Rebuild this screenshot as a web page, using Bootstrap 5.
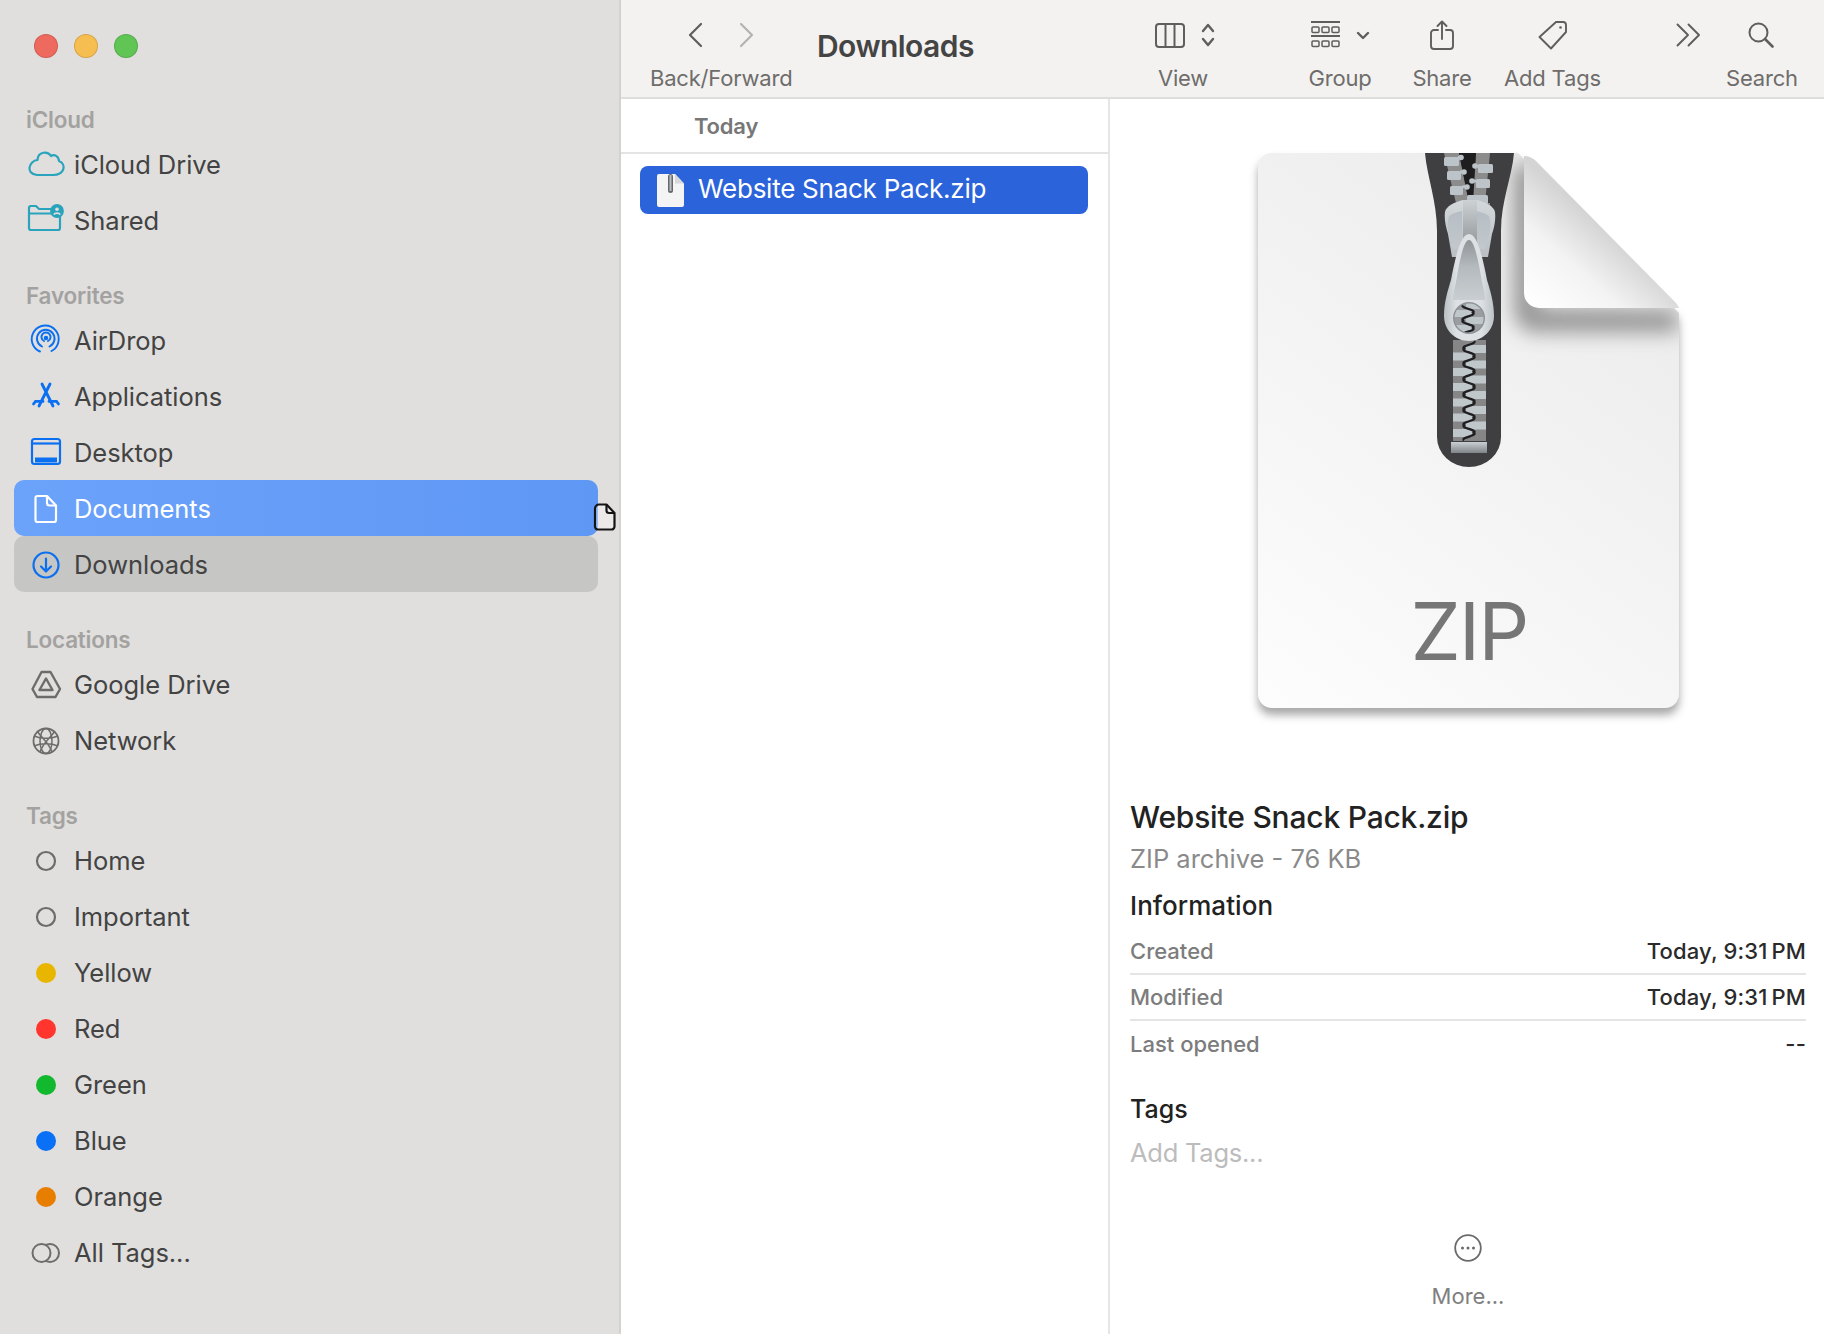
<!DOCTYPE html>
<html lang="en">
<head>
<meta charset="utf-8">
<title>Downloads</title>
<link href="https://cdn.jsdelivr.net/npm/bootstrap@5.3.0/dist/css/bootstrap.min.css" rel="stylesheet">
<style>
html,body{height:1334px;overflow:hidden;}
body{font-family:Inter,"Liberation Sans",sans-serif;background:#fff;color:#434343;}
.fw{width:1824px;height:1334px;}
.side{width:621px;height:1334px;background:#e0dfdd;border-right:2px solid #d3d2d0;flex:none;position:relative;}
.lights{height:102px;padding:34px 0 0 34px;gap:16px;}
.light{width:24px;height:24px;border-radius:50%;border:1px solid rgba(0,0,0,.13);}
.l-r{background:#ee6a5f;}.l-y{background:#f6be50;}.l-g{background:#61c555;}
.sect{margin-bottom:30px;}
.sect-h{height:34px;padding:2px 0 0 26px;font-size:22.5px;font-weight:600;color:#a3a2a1;letter-spacing:-.2px;line-height:32px;}
.srow{height:56px;margin:0 21px 0 14px;padding:2px 0 0 60px;font-size:25.5px;letter-spacing:-.04px;position:relative;border-radius:10px;}
.srow .ico{position:absolute;left:0;top:0;width:64px;height:56px;}
.sel-a{background:linear-gradient(90deg,#6ba2fa,#5f97f5);color:#fff;}
.sel-b{background:#c6c6c4;}
.dragdoc{position:absolute;left:593px;top:503px;width:23px;height:28px;}
.tbar{height:99px;background:#f3f2f0;border-bottom:2px solid #dededd;}
.tool{flex:none;}
.tool .ti{height:62px;padding-top:8px;}
.tool .tl{font-size:22px;line-height:32px;color:#6e6d6b;letter-spacing:-.2px;white-space:nowrap;}
.t-bf{width:142px;margin-left:29px;}
.t-bf .ti{gap:36px;}
.t-title{width:303px;margin-left:25px;padding-top:27px;font-size:30px;line-height:38px;font-weight:600;color:#444;letter-spacing:-.55px;}
.t-view{width:126px;}
.t-view .ti{padding-left:3px;}
.t-group{width:120px;margin-left:34px;}
.t-group .ti{padding-left:1px;}
.t-share{width:84px;}
.t-tags{width:137px;}
.t-more{width:76px;margin-left:29px;}
.t-search{width:70px;}
.list{width:489px;border-right:2px solid #e6e6e6;flex:none;height:1235px;}
.colhead{height:55px;border-bottom:2px solid #e4e4e4;padding-left:73px;font-size:22px;font-weight:600;color:#777;line-height:54px;letter-spacing:-.2px;}
.filerow{height:48px;margin:12px 20px 0 19px;background:#2b63db;border-radius:8px;color:#fff;font-size:26px;letter-spacing:-.25px;padding-left:17px;gap:14px;}
.filerow span{padding-bottom:3px;}
.insp{width:714px;flex:none;}
.det{padding:0 18px 0 20px;}
.d-name{font-size:30px;line-height:40px;font-weight:550;color:#222;letter-spacing:-.2px;white-space:nowrap;}
.d-sub{font-size:25.5px;line-height:36px;margin-top:4px;color:#8a8a8a;}
.d-h{font-size:26px;line-height:34px;font-weight:550;color:#222;letter-spacing:.05px;}
.d-h1{margin-top:12px;margin-bottom:6px;}
.d-h2{margin-top:25px;font-size:25px;}
.d-row{height:46px;font-size:22px;}
.d-row.sep{border-bottom:2px solid #e5e5e5;}
.d-k{color:#7c7c7c;font-weight:500;}
.d-v{color:#2a2a2a;font-weight:500;letter-spacing:.15px;}
.d-add{font-size:25.5px;line-height:36px;margin-top:9px;color:#bcbcbc;letter-spacing:-.25px;}
.d-more{margin-top:63px;}
.d-more span{font-size:22px;line-height:30px;margin-top:19px;color:#808080;}
.ziplabel{font-family:Inter,sans-serif;font-size:80px;font-weight:400;letter-spacing:-2px;fill:#767676;}
svg{display:block;}
</style>
</head>
<body>
<div class="d-flex fw">
  <aside class="side">
    <div class="d-flex lights">
      <span class="light l-r"></span>
      <span class="light l-y"></span>
      <span class="light l-g"></span>
    </div>

    <div class="sect">
      <div class="sect-h">iCloud</div>
      <div class="srow d-flex align-items-center"><svg class="ico" viewBox="0 0 64 56" fill="none" stroke="#2aa3bd" stroke-width="2.200"><path d="M23 39h16c12 0 13.500-11 6-14-.5-5-4.500-7-8-5-3-5-13-5-13.500 4C15 24.500 11 38 23 39z" stroke-linejoin="round"/></svg>iCloud Drive</div>
      <div class="srow d-flex align-items-center"><svg class="ico" viewBox="0 0 64 56" fill="none" stroke="#2aa3bd" stroke-width="2.200"><path d="M41.500 17H25l-3-3h-5a2 2 0 0 0-2 2v20a2 2 0 0 0 2 2h27a2 2 0 0 0 2-2V24M15 21.500h25"/><circle cx="43" cy="19" r="5.800" fill="#2aa3bd"/><circle cx="43" cy="17.200" r="1.800" fill="#e0dfdd" stroke="none"/><path d="M39.800 22.600c1-2 5.400-2 6.400 0" stroke="#e0dfdd" stroke-width="1.600"/></svg>Shared</div>
    </div>

    <div class="sect">
      <div class="sect-h">Favorites</div>
      <div class="srow d-flex align-items-center"><svg class="ico" viewBox="0 0 64 56" fill="none" stroke="#0a6ff0" stroke-width="1.900" stroke-linecap="round"><path d="M26 39.500a13.500 13.500 0 1 1 11.500-.5M28 34.500a8.800 8.800 0 1 1 7.500 0M30 29a4.500 4.500 0 1 1 4 0"/><circle cx="32" cy="26" r="1.300" fill="#0a6ff0"/></svg>AirDrop</div>
      <div class="srow d-flex align-items-center"><svg class="ico" viewBox="0 0 64 56" fill="none" stroke="#0a6ff0" stroke-linecap="round"><path d="M28 16l11 22M36 16L25 38" stroke-width="2.800"/><path d="M19.500 36l2-2.600H29M44.500 36l-2-2.600H35" stroke-width="2.800"/></svg>Applications</div>
      <div class="srow d-flex align-items-center"><svg class="ico" viewBox="0 0 64 56" fill="none" stroke="#0a6ff0" stroke-width="2.200"><rect x="18" y="15" width="28" height="25" rx="2.500"/><path d="M18 19.500h28"/><rect x="21" y="33.500" width="22" height="5" fill="#0a6ff0" stroke="none"/></svg>Desktop</div>
      <div class="srow d-flex align-items-center sel-a"><svg class="ico" viewBox="0 0 64 56" fill="none" stroke="#fff" stroke-width="2.200" stroke-linejoin="round"><path d="M23.500 16h9.500l9 9.500V40a2 2 0 0 1-2 2H23.500a2 2 0 0 1-2-2V18a2 2 0 0 1 2-2z"/><path d="M33 16v7a2.500 2.500 0 0 0 2.500 2.500H42"/></svg>Documents</div>
      <div class="srow d-flex align-items-center sel-b"><svg class="ico" viewBox="0 0 64 56" fill="none" stroke="#0a6ff0" stroke-width="2.200" stroke-linecap="round" stroke-linejoin="round"><circle cx="32" cy="29" r="12.500"/><path d="M32 22.500v12.500M27 30.500l5 5 5-5"/></svg>Downloads</div>
    </div>

    <div class="sect">
      <div class="sect-h">Locations</div>
      <div class="srow d-flex align-items-center"><svg class="ico" viewBox="0 0 64 56" fill="none" stroke="#6d6c6a" stroke-width="2.400" stroke-linejoin="round"><path d="M27.500 16h9l9.500 17-4.500 8H23l-4.500-8z"/><path d="M32 22.500L38.500 34h-13z"/></svg>Google Drive</div>
      <div class="srow d-flex align-items-center"><svg class="ico" viewBox="0 0 64 56" fill="none" stroke="#6d6c6a" stroke-width="1.500"><circle cx="32" cy="29" r="12.500" stroke-width="1.800"/><ellipse cx="32" cy="29" rx="6" ry="12.500"/><path d="M20 24c7 3 17 3 24 0M20 34c7-3 17-3 24 0M23 19c4 6 12 12 15 21M41 19c-4 6-12 12-15 21"/></svg>Network</div>
    </div>

    <div class="sect">
      <div class="sect-h">Tags</div>
      <div class="srow d-flex align-items-center"><svg class="ico" viewBox="0 0 64 56"><circle cx="32" cy="29" r="9" fill="none" stroke="#6d6c6a" stroke-width="2.200"/></svg>Home</div>
      <div class="srow d-flex align-items-center"><svg class="ico" viewBox="0 0 64 56"><circle cx="32" cy="29" r="9" fill="none" stroke="#6d6c6a" stroke-width="2.200"/></svg>Important</div>
      <div class="srow d-flex align-items-center"><svg class="ico" viewBox="0 0 64 56"><circle cx="32" cy="29" r="10" fill="#e8b500"/></svg>Yellow</div>
      <div class="srow d-flex align-items-center"><svg class="ico" viewBox="0 0 64 56"><circle cx="32" cy="29" r="10" fill="#ff352e"/></svg>Red</div>
      <div class="srow d-flex align-items-center"><svg class="ico" viewBox="0 0 64 56"><circle cx="32" cy="29" r="10" fill="#12b82e"/></svg>Green</div>
      <div class="srow d-flex align-items-center"><svg class="ico" viewBox="0 0 64 56"><circle cx="32" cy="29" r="10" fill="#0a70f5"/></svg>Blue</div>
      <div class="srow d-flex align-items-center"><svg class="ico" viewBox="0 0 64 56"><circle cx="32" cy="29" r="10" fill="#e87e00"/></svg>Orange</div>
      <div class="srow d-flex align-items-center"><svg class="ico" viewBox="0 0 64 56" fill="none" stroke="#6d6c6a" stroke-width="2"><circle cx="36" cy="29" r="9"/><circle cx="27.500" cy="29" r="9" fill="#e0dfdd"/></svg>All Tags...</div>
    </div>

    <svg class="dragdoc" viewBox="0 0 23 28" fill="rgba(255,255,255,.35)" stroke="#141414" stroke-width="2.200" stroke-linejoin="round"><path d="M6 1.500h7.500l8 8.500v13.500a3 3 0 0 1-3 3H5a3 3 0 0 1-3-3V5.500a4 4 0 0 1 4-4z"/><path d="M13.500 1.500v6a2.500 2.500 0 0 0 2.500 2.500h5.500" fill="none"/></svg>
  </aside>

  <div class="flex-grow-1 d-flex flex-column">
    <header class="d-flex tbar">
      <div class="tool t-bf text-center">
        <div class="ti d-flex justify-content-center align-items-center">
          <svg width="16" height="26" viewBox="0 0 16 26" fill="none" stroke="#5f5e5c" stroke-width="2.200" stroke-linecap="round" stroke-linejoin="round"><path d="M14 2L3 13l11 11"/></svg>
          <svg width="16" height="26" viewBox="0 0 16 26" fill="none" stroke="#b4b3b1" stroke-width="2.200" stroke-linecap="round" stroke-linejoin="round"><path d="M2 2l11 11L2 24"/></svg>
        </div>
        <div class="tl">Back/Forward</div>
      </div>
      <div class="t-title">Downloads</div>
      <div class="tool t-view text-center">
        <div class="ti d-flex justify-content-center align-items-center gap-3">
          <svg width="30" height="25" viewBox="0 0 30 25" fill="none" stroke="#5f5e5c" stroke-width="2"><rect x="1" y="1" width="28" height="23" rx="3"/><path d="M10.500 1v23M19.500 1v23"/></svg>
          <svg width="14" height="24" viewBox="0 0 14 24" fill="none" stroke="#5f5e5c" stroke-width="2.400" stroke-linecap="round" stroke-linejoin="round"><path d="M2 8l5-6 5 6M2 16l5 6 5-6"/></svg>
        </div>
        <div class="tl">View</div>
      </div>
      <div class="tool t-group text-center">
        <div class="ti d-flex justify-content-center align-items-center gap-3">
          <svg width="29" height="28" viewBox="0 0 29 28" fill="none" stroke="#5f5e5c" stroke-width="1.500"><path d="M0 1h29M0 15h29" stroke-width="1.800"/><rect x="1" y="6" width="7" height="5.500" rx="1"/><rect x="11" y="6" width="7" height="5.500" rx="1"/><rect x="21" y="6" width="7" height="5.500" rx="1"/><rect x="1" y="20" width="7" height="5.500" rx="1"/><rect x="11" y="20" width="7" height="5.500" rx="1"/><rect x="21" y="20" width="7" height="5.500" rx="1"/></svg>
          <svg width="14" height="9" viewBox="0 0 14 9" fill="none" stroke="#5f5e5c" stroke-width="2.400" stroke-linecap="round" stroke-linejoin="round"><path d="M2 2l5 5 5-5"/></svg>
        </div>
        <div class="tl">Group</div>
      </div>
      <div class="tool t-share text-center">
        <div class="ti d-flex justify-content-center align-items-center">
          <svg width="24" height="30" viewBox="0 0 24 30" fill="none" stroke="#5f5e5c" stroke-width="1.900" stroke-linecap="round" stroke-linejoin="round"><path d="M8 10H4a3 3 0 0 0-3 3v13a3 3 0 0 0 3 3h16a3 3 0 0 0 3-3V13a3 3 0 0 0-3-3h-4M12 19V1.500M7.500 6L12 1.500 16.500 6"/></svg>
        </div>
        <div class="tl">Share</div>
      </div>
      <div class="tool t-tags text-center">
        <div class="ti d-flex justify-content-center align-items-center">
          <svg width="30" height="30" viewBox="0 0 30 30" fill="none" stroke="#5f5e5c" stroke-width="1.900" stroke-linejoin="round"><path d="M18 2h7a3 3 0 0 1 3 3v7L13 28.500 1.500 17z"/><circle cx="22.500" cy="7.500" r="1.300" fill="#5f5e5c" stroke="none"/></svg>
        </div>
        <div class="tl">Add Tags</div>
      </div>
      <div class="tool t-more text-center">
        <div class="ti d-flex justify-content-center align-items-center">
          <svg width="25" height="24" viewBox="0 0 25 24" fill="none" stroke="#5f5e5c" stroke-width="1.900" stroke-linecap="round" stroke-linejoin="round"><path d="M1.500 1.500L12 12 1.500 22.500M12.500 1.500L23 12 12.500 22.500"/></svg>
        </div>
        <div class="tl">&nbsp;</div>
      </div>
      <div class="tool t-search text-center">
        <div class="ti d-flex justify-content-center align-items-center">
          <svg width="26" height="26" viewBox="0 0 26 26" fill="none" stroke="#5f5e5c" stroke-width="2" stroke-linecap="round"><circle cx="10.500" cy="10.500" r="9"/><path d="M17 17l7.500 7.500" stroke-width="2.600"/></svg>
        </div>
        <div class="tl">Search</div>
      </div>
    </header>

    <div class="d-flex flex-grow-1">
      <section class="list">
        <div class="colhead">Today</div>
        <div class="filerow d-flex align-items-center">
          <svg width="27" height="33" viewBox="0 0 27 33" class="flex-shrink-0"><path d="M2 0h16l9 9.500V31a2 2 0 0 1-2 2H2a2 2 0 0 1-2-2V2a2 2 0 0 1 2-2z" fill="#f4f4f4"/><path d="M18 0v9.500h9z" fill="#d8d8d8"/><rect x="11" y="0" width="5" height="19" rx="2.500" fill="#66676a"/><rect x="12.500" y="1" width="2" height="16" fill="#b9c0c4"/></svg>
          <span class="text-nowrap">Website Snack Pack.zip</span>
        </div>
      </section>

      <section class="insp">
        <svg width="714" height="698" viewBox="1110 99 714 698">
          <defs>
            <linearGradient id="pg" gradientUnits="userSpaceOnUse" x1="1258" y1="708" x2="1679" y2="153"><stop offset="0" stop-color="#fdfdfd"/><stop offset=".5" stop-color="#f3f3f3"/><stop offset="1" stop-color="#e9e9e9"/></linearGradient>
            <linearGradient id="fg" gradientUnits="userSpaceOnUse" x1="1530" y1="305" x2="1600" y2="225"><stop offset="0" stop-color="#fff"/><stop offset=".55" stop-color="#f3f3f3"/><stop offset="1" stop-color="#d4d4d4"/></linearGradient>
            <linearGradient id="sl" x1="0" y1="0" x2="0" y2="1"><stop offset="0" stop-color="#d3d8db"/><stop offset="1" stop-color="#b9bfc3"/></linearGradient>
            <linearGradient id="rec" x1="0" y1="0" x2="0" y2="1"><stop offset="0" stop-color="#b6bec5"/><stop offset="1" stop-color="#c2c8cc"/></linearGradient>
            <linearGradient id="strip" x1="0" y1="0" x2="0" y2="1"><stop offset="0" stop-color="#ccd1d4"/><stop offset="1" stop-color="#8d9194"/></linearGradient>
            <linearGradient id="tab" x1="0" y1="0" x2="0" y2="1"><stop offset="0" stop-color="#8f9497"/><stop offset=".45" stop-color="#b4babd"/><stop offset="1" stop-color="#c9ced1"/></linearGradient>
            <linearGradient id="rim" x1="0" y1="0" x2="1" y2="0"><stop offset="0" stop-color="#b9bfc3"/><stop offset=".25" stop-color="#dde1e4"/><stop offset=".75" stop-color="#dde1e4"/><stop offset="1" stop-color="#bcc2c6"/></linearGradient>
            <linearGradient id="stp" x1="0" y1="0" x2="0" y2="1"><stop offset="0" stop-color="#c9cfd2"/><stop offset="1" stop-color="#7f8488"/></linearGradient>
            <filter id="ds" x="-10%" y="-10%" width="120%" height="120%"><feGaussianBlur stdDeviation="4"/></filter>
            <filter id="fs" x="-30%" y="-30%" width="160%" height="160%"><feGaussianBlur stdDeviation="10"/></filter>
            <clipPath id="pc"><path d="M1272 153h246l161 160v381a14 14 0 0 1-14 14H1272a14 14 0 0 1-14-14V167a14 14 0 0 1 14-14z"/></clipPath>
            <clipPath id="hole"><circle cx="1469" cy="318" r="14.500"/></clipPath>
          </defs>

          <path d="M1272 160h246l161 160v381a14 14 0 0 1-14 14H1272a14 14 0 0 1-14-14V174a14 14 0 0 1 14-14z" fill="#8c8c8c" filter="url(#ds)" opacity=".75"/>
          <path d="M1272 153h246l161 160v381a14 14 0 0 1-14 14H1272a14 14 0 0 1-14-14V167a14 14 0 0 1 14-14z" fill="url(#pg)"/>
          <g clip-path="url(#pc)">
            <path d="M1524 165h14v143l140 2v22H1535a21 21 0 0 1-21-21V165z" fill="#7d7d7d" filter="url(#fs)" opacity=".8"/>
          </g>
          <path d="M1524 156c5 0 9 2 12 5l139 141c2 2 3 4 4 6h-140a15 15 0 0 1-15-15z" fill="url(#fg)"/>

          <path d="M1425 153h89c-2 24-13 48-13 78v206a32 30 0 0 1-64 0V231c0-30-10-54-12-78z" fill="#3f3f42"/>
          <path d="M1444 153h15l10 50h-13zM1476 153h14l-5 50h-13z" fill="#8c8c8c"/>
          <path d="M1459 153h17l-3 50h-4z" fill="#1e1e20"/>
          <path d="M1457 203h33v6h-33z" fill="#8c8c8c"/>
          <g fill="#bcc4c9">
            <rect x="1444" y="157" width="15" height="9" rx="1.500"/><circle cx="1461" cy="157.500" r="2.800"/><rect x="1458" y="156" width="4" height="2.600"/>
            <rect x="1447" y="171" width="14" height="9" rx="1.500"/><circle cx="1464" cy="172" r="2.800"/><rect x="1460" y="170.500" width="4" height="2.600"/>
            <rect x="1450" y="186" width="13" height="9" rx="1.500"/><circle cx="1467" cy="187" r="2.800"/><rect x="1462" y="185.500" width="4" height="2.600"/>
            <rect x="1478" y="164" width="15" height="9" rx="1.500"/><circle cx="1475" cy="166" r="2.800"/><rect x="1475" y="164.800" width="4" height="2.600"/>
            <rect x="1476" y="179" width="14" height="9" rx="1.500"/><circle cx="1472" cy="181" r="2.800"/><rect x="1472" y="179.800" width="5" height="2.600"/>
            <rect x="1467" y="195" width="21" height="9" rx="1.500"/>
          </g>

          <rect x="1453" y="340" width="33" height="101" fill="#868686"/>
          <g fill="#bfc7cb">
            <rect x="1453" y="352.500" width="19" height="8"/><rect x="1453" y="368" width="19" height="8"/><rect x="1453" y="383" width="19" height="8"/><rect x="1453" y="398.500" width="19" height="8"/><rect x="1453" y="413.500" width="19" height="8"/><rect x="1453" y="429" width="19" height="8"/>
            <rect x="1466" y="345" width="20" height="8"/><rect x="1466" y="360.500" width="20" height="8"/><rect x="1466" y="375.500" width="20" height="8"/><rect x="1466" y="391" width="20" height="8"/><rect x="1466" y="406" width="20" height="8"/><rect x="1466" y="421.500" width="20" height="8"/>
          </g>
          <path d="M1474 341c4 3-14 4.500-10 7.650c-4 3 14 4.500 10 7.650c4 3-14 4.500-10 7.650c-4 3 14 4.500 10 7.650c4 3-14 4.500-10 7.650c-4 3 14 4.500 10 7.650c4 3-14 4.500-10 7.650c-4 3 14 4.500 10 7.650c4 3-14 4.500-10 7.650c-4 3 14 4.500 10 7.650c4 3-14 4.500-10 7.650c-4 3 14 4.500 10 7.650c4 3-14 4.500-10 7.650" fill="none" stroke="#1f1f21" stroke-width="2.300"/>
          <rect x="1451" y="442" width="36" height="11" fill="url(#stp)"/>

          <path d="M1463 200h14c8 2 17 6 18 12 1 8-1 16-3 22l-4 23h-36l-4-23c-2-7-4-14-3-22 1-6 10-10 18-12z" fill="url(#sl)"/>
          <path d="M1449 216c4-3 9-4 13-5v38h-9c-3-10-8-22-4-33zM1489 216c-4-3-9-4-13-5v38h9c3-10 8-22 4-33z" fill="url(#rec)"/>
          <rect x="1463" y="200" width="14" height="50" fill="url(#strip)"/>
          <path d="M1469 234c8 0 13 20 18 46 3 10 7 22 7 36 0 14-11 25-25 25s-25-11-25-25c0-14 4-26 7-36 5-26 10-46 18-46z" fill="url(#rim)"/>
          <path d="M1469 240c5 0 9 18 13 42 2 8 3 14 3 18h-32c0-4 1-10 3-18 4-24 8-42 13-42z" fill="url(#tab)"/>
          <circle cx="1469" cy="318" r="16" fill="#8e9397"/>
          <g clip-path="url(#hole)">
            <rect x="1450" y="299" width="40" height="40" fill="#9a9da0"/>
            <rect x="1454" y="310" width="18" height="7" fill="#bfc7cb"/><rect x="1454" y="325" width="18" height="7" fill="#bfc7cb"/>
            <rect x="1466" y="302" width="18" height="7" fill="#bfc7cb"/><rect x="1466" y="317" width="18" height="7" fill="#bfc7cb"/><rect x="1466" y="332" width="18" height="7" fill="#bfc7cb"/>
            <path d="M1463 305c-4 3 14 4.500 10 7.650c4 3-14 4.500-10 7.650c-4 3 14 4.500 10 7.650c4 3-14 4.500-10 7.650" fill="none" stroke="#1f1f21" stroke-width="2.300"/>
          </g>
          <text x="1469" y="660" text-anchor="middle" class="ziplabel">ZIP</text>
        </svg>

        <div class="det">
          <div class="d-name">Website Snack Pack.zip</div>
          <div class="d-sub">ZIP archive - 76 KB</div>
          <div class="d-h d-h1">Information</div>
          <div>
            <div class="d-row sep d-flex justify-content-between align-items-center"><span class="d-k">Created</span><span class="d-v">Today, 9:31&#8239;PM</span></div>
            <div class="d-row sep d-flex justify-content-between align-items-center"><span class="d-k">Modified</span><span class="d-v">Today, 9:31&#8239;PM</span></div>
            <div class="d-row d-flex justify-content-between align-items-center"><span class="d-k">Last opened</span><span class="d-v">--</span></div>
          </div>
          <div class="d-h d-h2">Tags</div>
          <div class="d-add">Add Tags...</div>
          <div class="d-more d-flex flex-column align-items-center">
            <svg width="28" height="28" viewBox="0 0 28 28" fill="none"><circle cx="14" cy="14" r="12.800" stroke="#6a6a6a" stroke-width="1.800"/><circle cx="8.500" cy="14" r="1.500" fill="#6a6a6a"/><circle cx="14" cy="14" r="1.500" fill="#6a6a6a"/><circle cx="19.500" cy="14" r="1.500" fill="#6a6a6a"/></svg>
            <span>More...</span>
          </div>
        </div>
      </section>
    </div>
  </div>
</div>
<script src="https://cdn.jsdelivr.net/npm/bootstrap@5.3.0/dist/js/bootstrap.bundle.min.js"></script>
</body>
</html>
